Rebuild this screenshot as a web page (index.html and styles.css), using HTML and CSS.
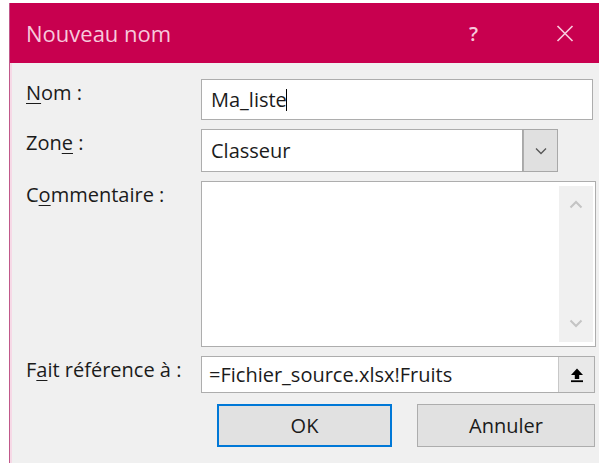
FILE: index.html
```html
<!DOCTYPE html>
<html lang="fr">
<head>
<meta charset="utf-8">
<title>Nouveau nom</title>
<link rel="stylesheet" href="styles.css">
</head>
<body>
<div class="window">
  <header class="titlebar">
    <span class="title">Nouveau nom</span>
    <span class="controls">
      <span class="help">?</span>
      <svg class="close" width="18" height="17" viewBox="0 0 18 17"><path d="M1.5 1 L16.5 16 M16.5 1 L1.5 16" stroke="currentColor" stroke-width="1.7" fill="none"/></svg>
    </span>
  </header>
  <div class="body">
    <div class="form">
      <label class="lbl"><u>N</u>om :</label>
      <div class="field name-field"><span class="value">Ma_liste</span><span class="caret"></span></div>

      <label class="lbl">Zon<u>e</u> :</label>
      <div class="select">
        <span class="value">Classeur</span>
        <span class="drop">
          <svg width="12" height="8" viewBox="0 0 12 8"><path d="M1 1.5 L6 6.5 L11 1.5" stroke="#555" stroke-width="1.3" fill="none"/></svg>
        </span>
      </div>

      <label class="lbl">C<u>o</u>mmentaire :</label>
      <div class="textarea">
        <div class="scroll">
          <svg width="14" height="9" viewBox="0 0 14 9"><path d="M1.5 7.5 L7 2 L12.5 7.5" stroke="#c4c4c4" stroke-width="2" fill="none"/></svg>
          <svg width="14" height="9" viewBox="0 0 14 9"><path d="M1.5 1.5 L7 7 L12.5 1.5" stroke="#c4c4c4" stroke-width="2" fill="none"/></svg>
        </div>
      </div>

      <label class="lbl">F<u>a</u>it référence à :</label>
      <div class="field ref-field">
        <span class="value">=Fichier_source.xlsx!Fruits</span>
        <span class="collapse">
          <svg width="14" height="16" viewBox="0 0 14 16"><path d="M7 1.5 L1 8 H4.8 V12 H9.2 V8 H13 Z" fill="#000"/><rect x="1" y="13.3" width="12" height="1.8" fill="#000"/></svg>
        </span>
      </div>

      <div class="buttons">
        <button class="btn primary">OK</button>
        <button class="btn">Annuler</button>
      </div>
    </div>
  </div>
</div>
</body>
</html>
```
FILE: styles.css
```css
html, body {
  margin: 0;
  height: 100%;
  background: #ffffff;
}

body {
  padding: 3px 0 0 9px;
  box-sizing: border-box;
  font-family: "Open Sans", "Noto Sans", sans-serif;
  color: #1b1b1b;
  overflow: hidden;
}

.window {
  height: 100%;
  display: flex;
  flex-direction: column;
  background: #f0f0f0;
  border-left: 1px solid #c0588a;
  box-shadow: inset 2px 0 0 #f6d9e6;
}

.titlebar {
  height: 60px;
  flex: none;
  background: #c8004f;
  display: flex;
  align-items: center;
  justify-content: space-between;
  padding: 0 25px 0 16px;
  color: #f7c9dc;
}

.title {
  font-size: 22px;
}

.controls {
  display: flex;
  align-items: center;
  gap: 78px;
}

.help {
  font-size: 20px;
  font-weight: 600;
}

.close {
  color: #f7c9dc;
}

.body {
  flex: 1;
  padding: 16px 2px 0 16px;
}

.form {
  display: grid;
  grid-template-columns: 175px 394px;
  grid-template-rows: 41px 43px 166px 37px 43px;
  row-gap: 9px;
  font-size: 20px;
}

.lbl {
  line-height: 24px;
  padding-top: 2px;
}

.lbl u {
  text-decoration-thickness: 1px;
  text-underline-offset: 3px;
}

.field,
.select,
.textarea {
  background: #ffffff;
  border: 1px solid #adadad;
  box-sizing: border-box;
  display: flex;
  align-items: center;
}

.name-field {
  width: 392px;
  padding-left: 9px;
}

.caret {
  width: 1px;
  height: 22px;
  background: #000;
  margin-left: -1px;
}

.select {
  width: 357px;
  padding-left: 9px;
  justify-content: space-between;
}

.drop {
  width: 34px;
  height: 100%;
  background: #e0e0e0;
  border-left: 1px solid #adadad;
  display: flex;
  align-items: center;
  justify-content: center;
  box-sizing: border-box;
  outline: 1px solid #a8a8a8;
}

.textarea {
  width: 395px;
  justify-content: flex-end;
  align-items: stretch;
  padding: 4px 2px 4px 0;
}

.scroll {
  width: 34px;
  background: #f0f0f0;
  display: flex;
  flex-direction: column;
  justify-content: space-between;
  align-items: center;
  padding: 14px 0 14px;
}

.ref-field {
  width: 394px;
  padding-left: 7px;
  justify-content: space-between;
}

.collapse {
  width: 36px;
  height: 100%;
  background: #e9e9e9;
  border-left: 1px solid #c8c8c8;
  display: flex;
  align-items: center;
  justify-content: center;
  box-sizing: border-box;
}

.buttons {
  grid-column: 2;
  display: flex;
  gap: 25px;
  padding-left: 16px;
  margin-top: 2px;
}

.btn {
  width: 178px;
  height: 43px;
  font: inherit;
  font-size: 20px;
  color: #1b1b1b;
  background: #e1e1e1;
  border: 1px solid #adadad;
}

.btn.primary {
  width: 175px;
  border: 2px solid #0078d7;
}
```
